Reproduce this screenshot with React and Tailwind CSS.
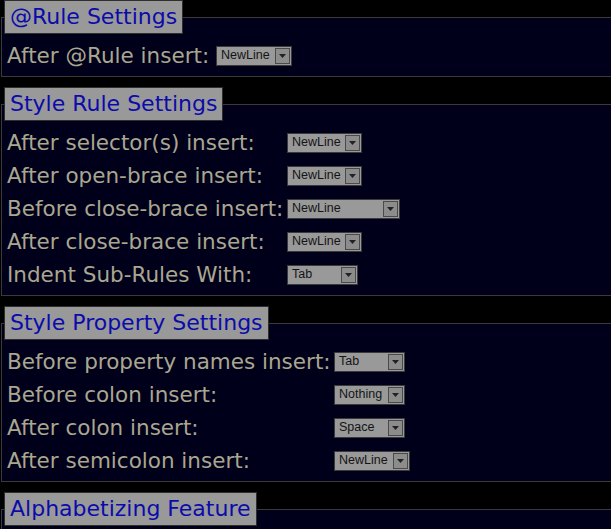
import React from 'react';

// Settings panel: fieldsets with legends, label + dropdown rows
const FONT = { fontFamily: '"DejaVu Sans", Verdana, sans-serif' };

const Dropdown = ({ value, width }) => (
  <div
    className="flex items-center h-[20px] border border-[#3a3a3a] bg-[#999999] shrink-0"
    style={{ width }}
  >
    <span
      className="flex-1 pl-[4px] text-[12.5px] leading-none text-[#141414] whitespace-nowrap overflow-hidden"
      style={{ fontFamily: '"Liberation Sans", Arial, sans-serif' }}
    >
      {value}
    </span>
    <span className="flex items-center justify-center w-[15px] h-[16px] mr-[1px] border border-[#4a4a4a] bg-[#8c8c8c]">
      <svg width="7" height="4" viewBox="0 0 7 4">
        <polygon points="0,0 7,0 3.5,4" fill="#222" />
      </svg>
    </span>
  </div>
);

const Section = ({ title, labelWidth, rows, last }) => (
  <fieldset
    className={`w-[640px] ml-[1px] border border-[#3a3a3a] bg-[#00001a] pl-[2px] pr-0 pt-[5px] pb-[4px] ${
      last ? 'min-h-[80px]' : 'mb-[10px]'
    }`}
  >
    <legend
      className="border border-[#2e2e2e] bg-[#999999] px-[5px] py-[4px] text-[22px] leading-[24px] text-[#0b0bab]"
      style={FONT}
    >
      {title}
    </legend>
    {rows.map((row) => (
      <div key={row.label} className="flex items-center h-[33px]">
        <span
          className="shrink-0 pl-[3px] whitespace-nowrap text-[21.5px] leading-none text-[#aaa790]"
          style={{ ...FONT, width: labelWidth }}
        >
          {row.label}
        </span>
        <Dropdown value={row.value} width={row.width} />
      </div>
    ))}
  </fieldset>
);

const sections = [
  {
    title: '@Rule Settings',
    labelWidth: 212,
    rows: [{ label: 'After @Rule insert:', value: 'NewLine', width: 76 }],
  },
  {
    title: 'Style Rule Settings',
    labelWidth: 283,
    rows: [
      { label: 'After selector(s) insert:', value: 'NewLine', width: 75 },
      { label: 'After open-brace insert:', value: 'NewLine', width: 75 },
      { label: 'Before close-brace insert:', value: 'NewLine', width: 113 },
      { label: 'After close-brace insert:', value: 'NewLine', width: 75 },
      { label: 'Indent Sub-Rules With:', value: 'Tab', width: 71 },
    ],
  },
  {
    title: 'Style Property Settings',
    labelWidth: 330,
    rows: [
      { label: 'Before property names insert:', value: 'Tab', width: 71 },
      { label: 'Before colon insert:', value: 'Nothing', width: 71 },
      { label: 'After colon insert:', value: 'Space', width: 71 },
      { label: 'After semicolon insert:', value: 'NewLine', width: 76 },
    ],
  },
];

export default function App() {
  return (
    <div className="w-[611px] h-[529px] bg-black overflow-hidden">
      {sections.map((s) => (
        <Section key={s.title} {...s} />
      ))}
      <Section title="Alphabetizing Feature" labelWidth={300} rows={[]} last />
    </div>
  );
}
